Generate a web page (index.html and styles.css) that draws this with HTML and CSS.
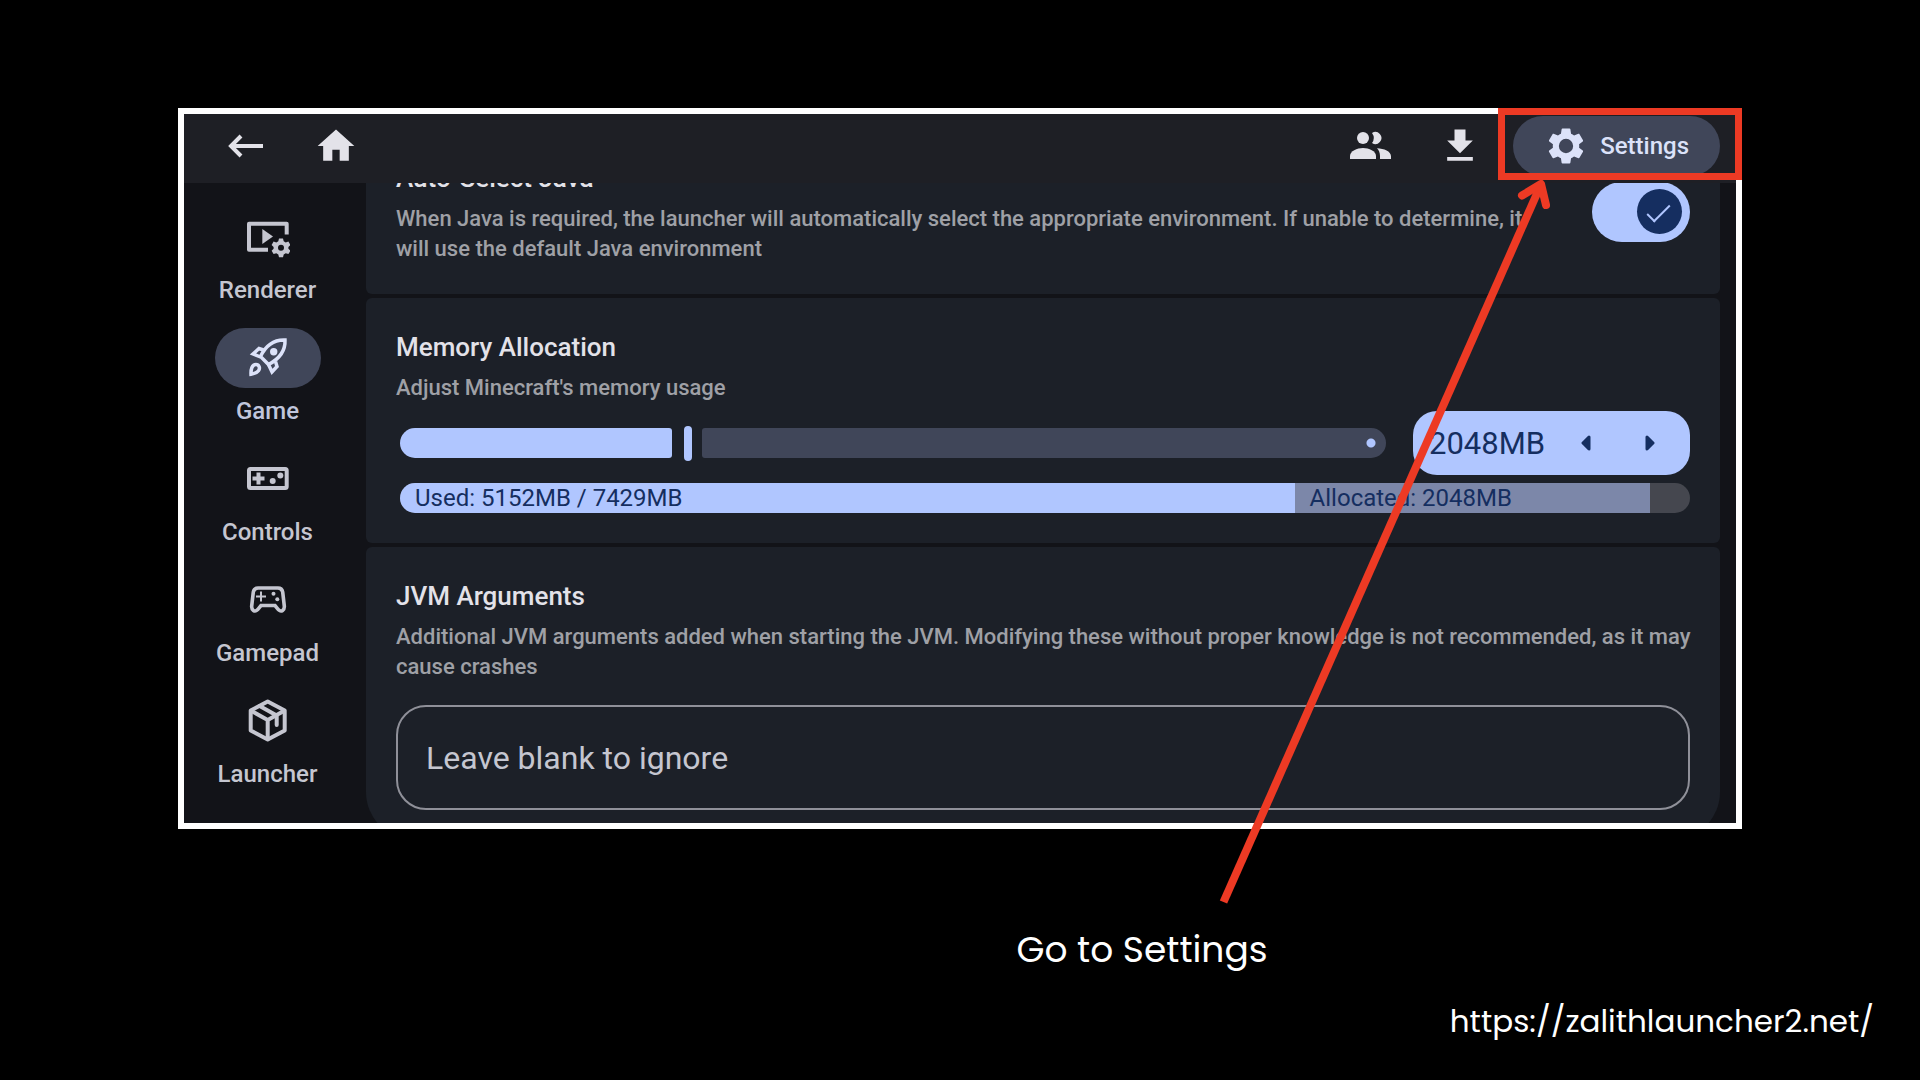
FILE: index.html
```html
<!DOCTYPE html>
<html lang="en">
<head>
    <meta charset="UTF-8">
    <meta name="viewport" content="width=device-width, initial-scale=1.0">
    <title>Zalith Launcher 2 - Settings</title>
    <link rel="stylesheet" href="styles.css">
</head>
<body>
    <main class="slide">
        <div class="shot">
            <div class="app">
                <header class="topbar">
                    <button class="icon-btn" aria-label="Back">
                        <svg class="icon" viewBox="0 0 44 44"><path d="M39 22H8M17 12L7 22l10 10" fill="none" stroke="currentColor" stroke-width="4"/></svg>
                    </button>
                    <button class="icon-btn" aria-label="Home">
                        <svg class="icon" viewBox="0 0 24 24"><path d="M10 20v-6h4v6h5v-8h3L12 3 2 12h3v8z"/></svg>
                    </button>
                    <span class="spacer"></span>
                    <button class="icon-btn" aria-label="Multiplayer">
                        <svg class="icon" viewBox="0 0 44 44">
                            <circle cx="15" cy="14" r="6"/>
                            <path d="M2 35v-3c0-5 7-8 13-8s13 3 13 8v3z"/>
                            <path d="M24 9a6 6 0 1 1 0 10a8.500 8.500 0 0 0 0-10z"/>
                            <path d="M29 24.200c7 .3 14 3 14 8V35H32v-3c0-3.400-1.200-6-3-7.800z"/>
                        </svg>
                    </button>
                    <button class="icon-btn" aria-label="Download">
                        <svg class="icon" viewBox="0 0 24 24"><path d="M19 9h-4V3H9v6H5l7 7 7-7zM5 18v2h14v-2H5z"/></svg>
                    </button>
                    <button class="settings-btn">
                        <svg class="icon" viewBox="0 0 24 24"><path d="M19.140 12.940c.04-.3.06-.61.06-.94 0-.32-.02-.64-.07-.94l2.030-1.580c.18-.14.23-.41.12-.61l-1.920-3.320c-.12-.22-.37-.29-.59-.22l-2.390.96c-.5-.38-1.030-.7-1.620-.94l-.36-2.540c-.04-.24-.24-.41-.48-.41h-3.840c-.24 0-.43.17-.47.41l-.36 2.540c-.59.24-1.130.57-1.620.94l-2.390-.96c-.22-.08-.47 0-.59.22L2.740 8.870c-.12.21-.08.47.12.61l2.030 1.580c-.05.3-.09.63-.09.94s.02.64.07.94l-2.030 1.580c-.18.14-.23.41-.12.61l1.920 3.320c.12.22.37.29.59.22l2.390-.96c.5.38 1.030.7 1.620.94l.36 2.540c.05.24.24.41.48.41h3.840c.24 0 .44-.17.47-.41l.36-2.540c.59-.24 1.130-.56 1.620-.94l2.390.96c.22.08.47 0 .59-.22l1.920-3.320c.12-.22.07-.47-.12-.61l-2.010-1.580zM12 15.900a3.900 3.900 0 1 1 0-7.800 3.900 3.900 0 0 1 0 7.800z"/></svg>
                        Settings
                    </button>
                </header>

                <div class="body">
                    <nav class="sidebar">
                        <button class="nav-item">
                            <span class="nav-pill">
                                <svg class="icon" viewBox="0 0 44 44">
                                    <path d="M22 34.700H3V8.700h37.700V19.500" fill="none" stroke="currentColor" stroke-width="4" stroke-linejoin="round"/>
                                    <path d="M16.300 14v15L27 21.500z"/>
                                    <path fill-rule="evenodd" d="M33 23.500h4l.7 2.800 2 1.100 2.700-.8 2 3.400-2 2v1.700l2 2-2 3.400-2.700-.8-2 1.100-.7 2.800h-4l-.7-2.800-2-1.100-2.700.8-2-3.400 2-2V32l-2-2 2-3.400 2.700.8 2-1.100zM35 29.800a3 3 0 1 0 0 6 3 3 0 0 0 0-6z"/>
                                </svg>
                            </span>
                            Renderer
                        </button>
                        <button class="nav-item active">
                            <span class="nav-pill">
                                <svg class="icon" viewBox="0 0 44 44">
                                    <g fill="none" stroke="currentColor" stroke-width="3.500" stroke-linejoin="miter">
                                        <path d="M14.500 20.500C20 9 28 3.500 39 4c.5 11-6 19-16.500 24.500z"/>
                                        <path d="M17.500 14l-4.500-1.500-6 5.500 7.500 3"/>
                                        <path d="M29.500 25.500l1.500 5-5 5.500-3.500-7.500"/>
                                        <path d="M5 38.200c-.2-5 1-9.700 5-9.700 3 0 4.500 3.500 2.500 6.200-1.500 2-4.500 3-7.500 3.500z"/>
                                    </g>
                                    <circle cx="27.700" cy="15.700" r="3.700"/>
                                </svg>
                            </span>
                            Game
                        </button>
                        <button class="nav-item">
                            <span class="nav-pill">
                                <svg class="icon" viewBox="0 0 44 44">
                                    <rect x="3" y="12" width="37.700" height="19" rx="1.500" fill="none" stroke="currentColor" stroke-width="4"/>
                                    <path d="M10.500 15.500h4v4h4v4h-4v4h-4v-4h-4v-4h4z"/>
                                    <circle cx="26.700" cy="24" r="3"/>
                                    <circle cx="34.300" cy="18.500" r="3"/>
                                </svg>
                            </span>
                            Controls
                        </button>
                        <button class="nav-item">
                            <span class="nav-pill">
                                <svg class="icon" viewBox="0 0 44 44">
                                    <path d="M12 10h20c2.500 0 4.200 1.500 4.700 4l1.600 14c.4 4-3 6.500-5.800 3.800L29 27.500H15l-3.500 4.300C8.700 34.500 5.300 32 5.700 28l1.600-14c.5-2.500 2.200-4 4.700-4z" fill="none" stroke="currentColor" stroke-width="3.600"/>
                                    <path d="M14 13.500h2v4h4v2h-4v4h-2v-4h-4v-2h4z"/>
                                    <circle cx="27.500" cy="15.700" r="2"/>
                                    <circle cx="31.300" cy="21.300" r="2"/>
                                </svg>
                            </span>
                            Gamepad
                        </button>
                        <button class="nav-item">
                            <span class="nav-pill">
                                <svg class="icon" viewBox="0 0 44 44">
                                    <g fill="none" stroke="currentColor" stroke-width="4" stroke-linejoin="round">
                                        <path d="M21.700 2.500l17 9v20l-17 9-17-9v-20z"/>
                                        <path d="M4.700 11.500l17 9.500 17-9.500M21.700 21v19"/>
                                        <path d="M13.700 7l17 9.500v9.500" stroke-linecap="round"/>
                                    </g>
                                </svg>
                            </span>
                            Launcher
                        </button>
                    </nav>

                    <div class="content">
                        <section class="card card-row">
                            <div>
                                <h2 id="java-title">Auto-Select Java</h2>
                                <p>When Java is required, the launcher will automatically select the appropriate environment. If unable to determine, it will use the default Java environment</p>
                            </div>
                            <input class="switch" type="checkbox" checked aria-labelledby="java-title">
                        </section>

                        <section class="card">
                            <h2 id="memory-title">Memory Allocation</h2>
                            <p>Adjust Minecraft's memory usage</p>
                            <div class="memory">
                                <div class="memory-row">
                                    <div class="slider">
                                        <span class="track-active" style="width: 27.6%"></span>
                                        <span class="track-rest"></span>
                                        <input type="range" min="256" max="6435" value="2048" aria-labelledby="memory-title">
                                    </div>
                                    <div class="stepper">
                                        <output>2048MB</output>
                                        <button aria-label="Decrease"><svg viewBox="0 0 10 16"><path d="M8 2v12L2 8z"/></svg></button>
                                        <button aria-label="Increase"><svg viewBox="0 0 10 16"><path d="M2 2v12l6-6z"/></svg></button>
                                    </div>
                                </div>
                                <div class="usage">
                                    <div class="used" style="width: 69.35%">Used: 5152MB / 7429MB</div>
                                    <div class="allocated" style="width: 27.57%">Allocated: 2048MB</div>
                                </div>
                            </div>
                        </section>

                        <section class="card">
                            <h2 id="jvm-title">JVM Arguments</h2>
                            <p>Additional JVM arguments added when starting the JVM. Modifying these without proper knowledge is not recommended, as it may cause crashes</p>
                            <input class="field" type="text" placeholder="Leave blank to ignore" aria-labelledby="jvm-title">
                        </section>
                    </div>
                </div>
            </div>

            <!-- red marker around the Settings button, with its arrow -->
            <div class="marker"></div>
            <svg class="arrow" viewBox="0 0 340 730">
                <path d="M13.500 721L329 8"/>
                <path d="M312 14.500L331 3l5 21" stroke-linecap="round" stroke-linejoin="round"/>
            </svg>
        </div>

        <p class="caption">Go to Settings</p>
        <footer><a href="https://zalithlauncher2.net/">https://zalithlauncher2.net/</a></footer>
    </main>
</body>
</html>
```
FILE: styles.css
```css
* { margin: 0; padding: 0; box-sizing: border-box; }
body { font-family: Roboto, "Liberation Sans", sans-serif; background: #000; color: #e3e2e9; }
button { border: none; background: none; color: inherit; font: inherit; cursor: pointer; }
.slide { padding-top: 108px; }

/* framed app */
.shot { position: relative; margin: 0 178px; }
.app { display: flex; flex-direction: column; aspect-ratio: 1564 / 721; border: 6px solid #fff; background: #121318; overflow: hidden; }
.icon { display: block; width: 44px; height: 44px; fill: currentColor; }

.topbar { display: flex; align-items: center; flex: none; height: 69px; padding: 0 16px 5px 40px; background: #1e1f25; }
.icon-btn { margin-right: 46px; }
.topbar .spacer { flex: 1; }
.topbar .spacer ~ .icon-btn + .icon-btn { margin-right: 31px; }
.settings-btn { display: flex; align-items: center; gap: 12px; height: 60px; padding: 0 31px; border-radius: 30px; background: #404659; color: #dce2f9; font-size: 24px; font-weight: 500; }

.body { display: flex; flex: 1; min-height: 0; }
.sidebar { display: flex; flex-direction: column; align-items: center; gap: 24px; flex: none; width: 167px; padding-top: 24px; }
.nav-item { display: flex; flex-direction: column; align-items: center; gap: 9px; color: #c5c6d0; font-size: 24px; font-weight: 500; line-height: 28px; }
.nav-pill { display: flex; align-items: center; justify-content: center; width: 106px; height: 60px; border-radius: 30px; }
.nav-item.active { color: #c0c6dc; }
.nav-item.active .nav-pill { background: #404659; color: #dce2f9; }

.content { display: flex; flex-direction: column; gap: 4px; flex: 1; min-width: 0; margin: 0 16px 0 15px; overflow: hidden; }
.content .card:first-child { margin-top: -54px; }
.card { flex: none; padding: 30px; border-radius: 6px; background: #1c2028; }
.card:last-child { border-radius: 6px 6px 48px 48px; }
.card h2 { margin-bottom: 6px; font-size: 26px; font-weight: 500; line-height: 39px; color: #e3e2e9; }
.card p { margin-right: -4px; font-size: 22px; font-weight: 500; line-height: 30px; color: #9fa0a6; }
.card-row { display: flex; align-items: center; gap: 46px; }
.card-row div { flex: 1; }

.switch { appearance: none; position: relative; display: flex; align-items: center; justify-content: flex-end; flex: none; width: 98px; height: 60px; padding-right: 8px; border-radius: 30px; background: #b0c6ff; }
.switch::before { content: ""; width: 45px; height: 45px; border-radius: 50%; background: #152e60; }
.switch::after { content: ""; position: absolute; top: 23px; right: 20px; width: 21px; height: 9px; border: solid #b0c6ff; border-width: 0 0 2px 2px; transform: rotate(-45deg); }

/* memory slider and usage bar */
.memory { margin-top: 8px; padding-left: 4px; }
.memory-row { display: flex; align-items: center; gap: 27px; margin-bottom: 8px; }
.slider { position: relative; display: flex; gap: 30px; flex: 1; height: 30px; }
.track-active { border-radius: 15px 3px 3px 15px; background: #b0c6ff; }
.track-rest { flex: 1; border-radius: 3px 15px 15px 3px; background: radial-gradient(circle at calc(100% - 15px) 50%, #b0c6ff 4px, #404659 5px); }
.slider input { appearance: none; position: absolute; inset: 0; width: 100%; background: none; }
.slider input::-webkit-slider-thumb { appearance: none; width: 8px; height: 35px; border-radius: 4px; background: #b0c6ff; }
.stepper { display: flex; align-items: center; width: 277px; height: 64px; padding: 0 8px 0 16px; border-radius: 24px; background: #b0c6ff; color: #152e60; }
.stepper output { flex: 1; font-size: 31px; }
.stepper button { display: flex; align-items: center; justify-content: center; width: 64px; height: 64px; }
.stepper svg { width: 10px; height: 16px; fill: #152e60; stroke: #152e60; stroke-width: 3; stroke-linejoin: round; }
.usage { display: flex; height: 30px; border-radius: 15px; background: #45474f; color: #152e60; font-size: 24px; line-height: 30px; overflow: hidden; }
.used { padding-left: 15px; background: #b0c6ff; }
.allocated { padding-left: 15px; background: #7c87a9; }

.field { display: block; width: 100%; height: 105px; margin-top: 23px; padding: 0 28px; border: 2px solid #8f9099; border-radius: 30px; background: none; color: #e3e2e9; font-family: inherit; font-size: 32px; }
.field::placeholder { color: #c5c6d0; }

/* annotations */
.marker { position: absolute; top: 0; right: 0; width: 244px; height: 72px; border: 7px solid #ed3a24; }
.arrow { position: absolute; top: 73px; right: 192px; width: 340px; height: 730px; overflow: visible; fill: none; stroke: #ed3a24; stroke-width: 8px; }
.caption { margin-top: 94px; padding-left: 364px; color: #fff; font-family: Poppins, Inter, "Open Sans", sans-serif; font-size: 36px; line-height: 54px; text-align: center; }
footer { margin-top: 22px; padding-right: 46px; text-align: right; }
footer a { color: #fff; font-family: Poppins, Inter, "Open Sans", sans-serif; font-size: 31px; line-height: 44px; text-decoration: none; }
```
